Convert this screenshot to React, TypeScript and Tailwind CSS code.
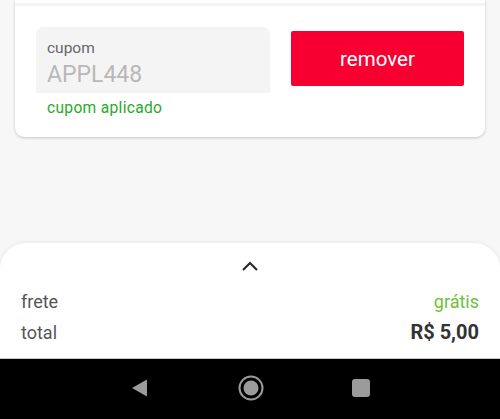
import React from 'react';

const font = { fontFamily: 'Roboto, "Liberation Sans", sans-serif' };

const App = () => {
  return (
    <div className="h-[419px] w-[500px] flex flex-col bg-[#f7f7f7] overflow-hidden" style={font}>
      {/* Coupon card (continues above the fold) */}
      <div className="mx-[15px] bg-white rounded-b-[9px] shadow-[0_1px_3px_rgba(0,0,0,0.2)]">
        <div className="pt-[3px]">
          <div className="h-[3px] bg-[#f4f4f4]" />
        </div>
        <div className="flex pl-[21px] pr-[20px] pt-[21px] gap-[21px]">
          <div className="w-[234px]">
            <div className="h-[66px] bg-[#f4f4f4] rounded-t-[7px] pl-[11px] pt-[10px]">
              <div className="text-[15.5px] leading-[22px] text-[#666]">cupom</div>
              <div className="mt-[2px] text-[23px] leading-[28px] text-[#b8b8b8]">APPL448</div>
            </div>
            <div className="pl-[11px] pt-[5px] pb-[19px] text-[15.6px] leading-[20px] text-[#2aaa2a] tracking-[0.3px]">
              cupom aplicado
            </div>
          </div>
          <button className="mt-[4px] w-[173px] h-[55px] pt-[2px] bg-[#f70031] rounded-[2px] text-white text-[20.5px]">
            remover
          </button>
        </div>
      </div>

      <div className="flex-1" />

      {/* Bottom summary sheet */}
      <div className="h-[115px] bg-white rounded-t-[26px] shadow-[0_-1px_4px_rgba(0,0,0,0.06)] px-[21px] pt-[16px]">
        <div className="flex justify-center">
          <svg width="20" height="14" viewBox="0 0 20 14" fill="none">
            <path d="M3 11 L10 4 L17 11" stroke="#2b2b2b" strokeWidth="2.2" />
          </svg>
        </div>
        <div className="flex justify-between items-center mt-[17px] h-[22px] text-[18px]">
          <span className="text-[#555]">frete</span>
          <span className="text-[#6cc13a]">grátis</span>
        </div>
        <div className="flex justify-between items-center mt-[9px] h-[22px]">
          <span className="text-[18px] text-[#555]">total</span>
          <span className="text-[20px] font-bold text-[#333]">R$ 5,00</span>
        </div>
      </div>

      {/* Android nav bar */}
      <div className="h-[61px] bg-black border-t border-[#c8c8c8] flex items-center justify-center gap-[88px] pb-[2px]">
        <svg width="20" height="20" viewBox="0 0 20 20">
          <path d="M17 1.5 L17 18.5 L2 10 Z" fill="#9b9b9b" />
        </svg>
        <svg width="26" height="26" viewBox="0 0 26 26">
          <circle cx="13" cy="13" r="11.5" stroke="#9b9b9b" strokeWidth="2" fill="none" />
          <circle cx="13" cy="13" r="7.5" fill="#9b9b9b" />
        </svg>
        <div className="w-[18px] h-[18px] rounded-[3px] bg-[#9b9b9b]" />
      </div>
    </div>
  );
};

export default App;
